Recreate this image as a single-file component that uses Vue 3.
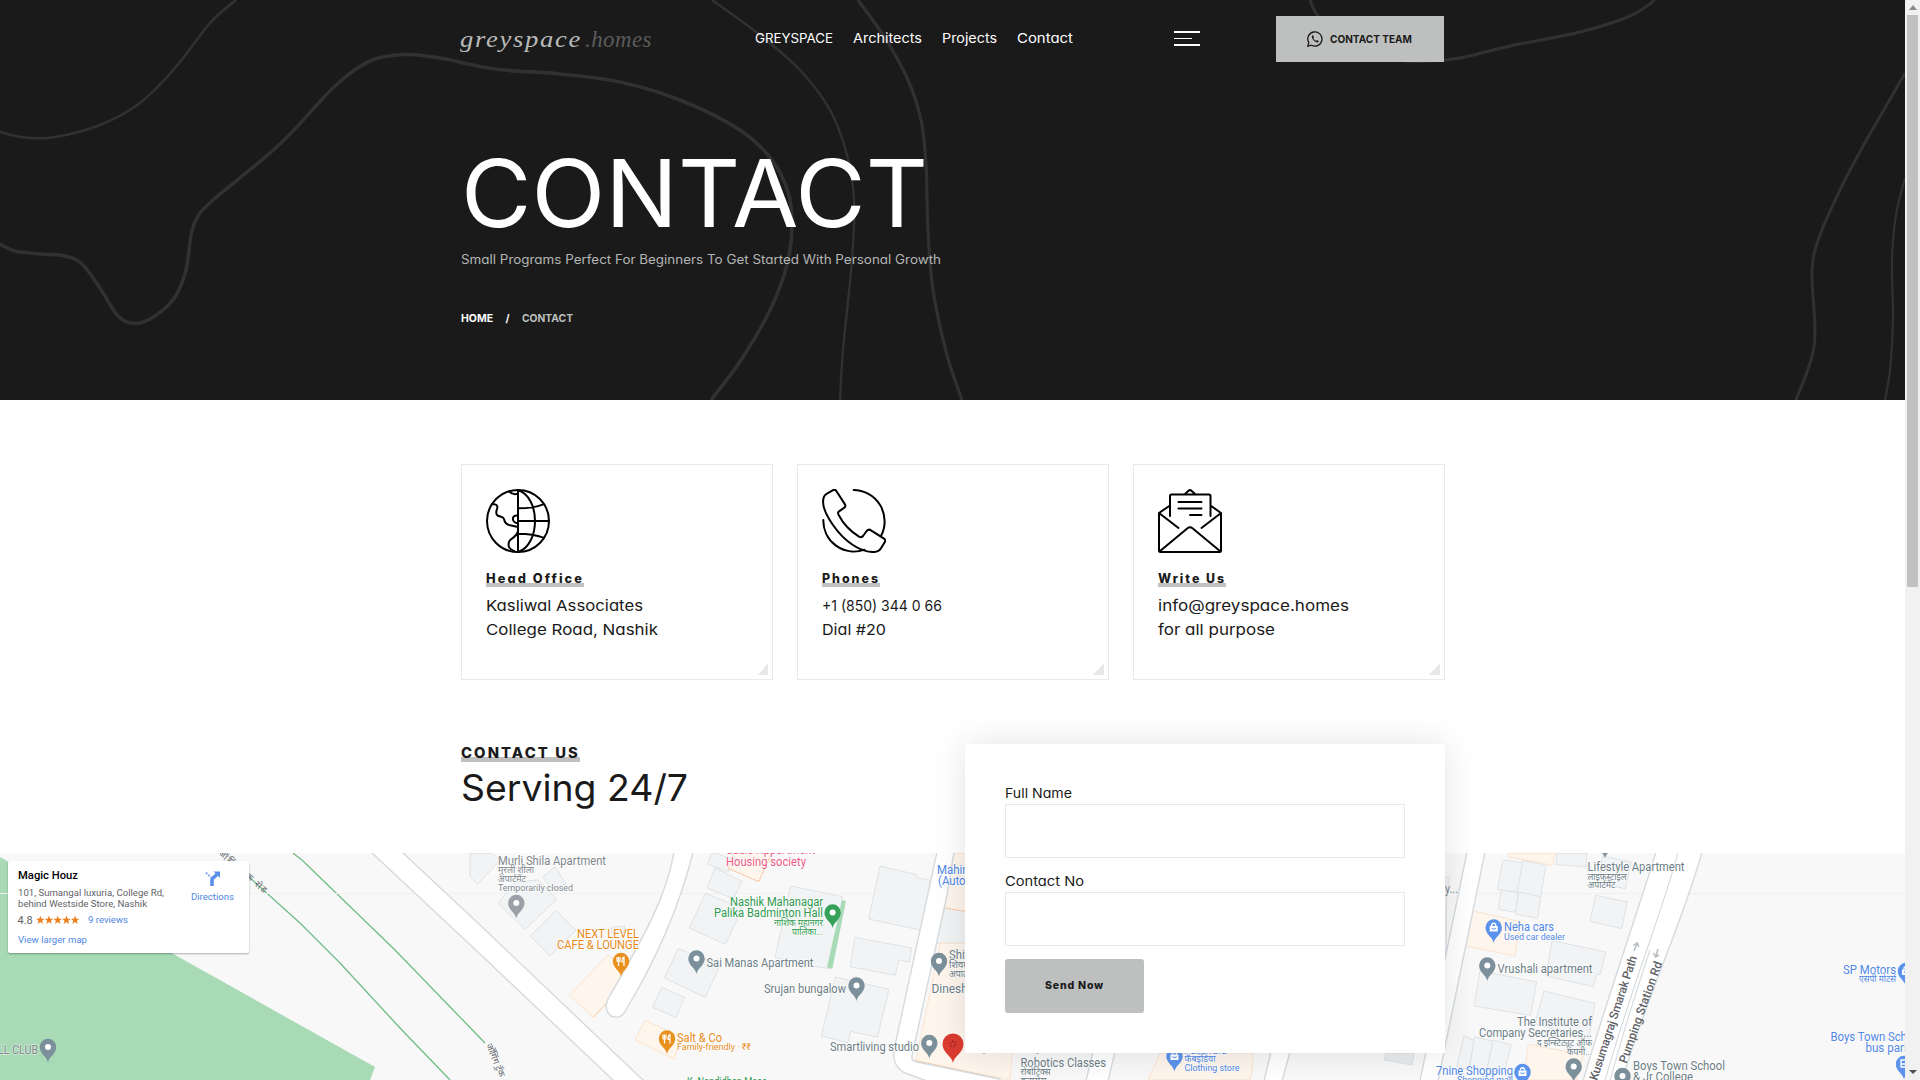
<script setup>
// Scales a label horizontally so it fills the given width.
const vFit = {
  mounted(el, { value }) {
    const natural = el.getBoundingClientRect().width
    el.style.transformOrigin = 'left center'
    el.style.transform = `scaleX(${value / natural})`
    el.style.marginRight = value - natural + 'px'
  },
}

// Catmull-Rom spline through a list of points.
function spline(p) {
  let d = `M${p[0]}`
  for (let i = 0; i < p.length - 1; i++) {
    const a = p[i - 1] || p[i], b = p[i], c = p[i + 1], e = p[i + 2] || c
    d += `C${b[0] + (c[0] - a[0]) / 6} ${b[1] + (c[1] - a[1]) / 6} ${c[0] - (e[0] - b[0]) / 6} ${c[1] - (e[1] - b[1]) / 6} ${c[0]} ${c[1]}`
  }
  return d
}

const curves = [
  { w: 2.6, p: [[0, 132], [25, 137.5], [55, 137], [100, 125], [140, 103], [175, 68], [210, 23], [236, 0]] },
  { w: 3.6, p: [[0, 244], [15, 251], [40, 254], [65, 256], [82, 264], [100, 288], [118, 316], [135, 323.5], [155, 316], [175, 297], [186, 270], [191, 235], [197, 218], [212, 201], [280, 144], [335, 86], [370, 61], [405, 54.5], [440, 58], [495, 69], [560, 74], [620, 82], [680, 100], [740, 130], [772, 160], [788, 192], [792, 225], [787, 265], [770, 310], [741, 360], [711, 400]] },
  { w: 2.4, p: [[712, 0], [760, 35], [800, 70], [830, 110], [847, 155], [854, 200], [852, 260], [843, 350], [840, 400]] },
  { w: 3.2, p: [[858, 0], [885, 38], [908, 80], [921, 120], [926, 165], [928, 230], [933, 290], [947, 355], [962, 400]] },
  { w: 3, p: [[1310, 0], [1319, 17], [1350, 45], [1400, 60], [1430, 61], [1460, 58], [1510, 46], [1580, 32], [1630, 16], [1655, 0]] },
  { w: 3, p: [[1905, 73], [1885, 108], [1862, 148], [1840, 190], [1820, 235], [1812, 270], [1815, 330], [1811, 360], [1796, 400]] },
  { w: 2.2, p: [[1905, 178], [1896, 215], [1892, 260], [1893, 320], [1890, 370], [1885, 400]] },
]

const links = [
  ['GREYSPACE', 78], ['Architects', 69], ['Projects', 55], ['Contact', 56],
]

const cards = [
  { icon: 'globe', title: 'Head Office', tw: 98, lines: [['Kasliwal Associates', 157], ['College Road, Nashik', 172]] },
  { icon: 'phone', title: 'Phones', tw: 58, lines: [['+1 (850) 344 0 66', 120], ['Dial #20', 64]] },
  { icon: 'mail', title: 'Write Us', tw: 68, lines: [['info@greyspace.homes', 191], ['for all purpose', 117]] },
]

const slate = '#6c7d86', grey = '#80868b', blue = '#5087e5', green = '#2f9a50', orange = '#e88a1a', pink = '#ec5a86'
// x, baseline, text, colour, size, width, anchor
const labels = [
  [498, 866, 'Murli Shila Apartment', grey, 12, 108],
  [498, 874, 'मुरली शीला', grey, 9, 36],
  [498, 883, 'अपार्टमेंट', grey, 9, 28],
  [498, 891.5, 'Temporarily closed', grey, 9, 75],
  [726, 855, 'Sudio Appartment', pink, 12, 89],
  [726, 866.5, 'Housing society', pink, 12, 80],
  [639, 938.5, 'NEXT LEVEL', orange, 12, 62, 'end'],
  [639, 949.5, 'CAFE & LOUNGE', orange, 12, 82, 'end'],
  [823, 906.5, 'Nashik Mahanagar', green, 12, 93, 'end'],
  [823, 917.5, 'Palika Badminton Hall', green, 12, 109, 'end'],
  [823, 926.5, 'नाशिक महानगर', green, 9, 49, 'end'],
  [823, 935.5, 'पालिका...', green, 9, 31, 'end'],
  [706.5, 967.5, 'Sai Manas Apartment', slate, 12, 107],
  [846, 993.5, 'Srujan bungalow', slate, 12, 82, 'end'],
  [677, 1042.5, 'Salt & Co', orange, 12, 45],
  [677, 1051, 'Family-friendly · ₹₹', orange, 9, 74],
  [919, 1051.5, 'Smartliving studio', slate, 12, 89, 'end'],
  [687, 1087, 'K. Nandidhan Masa', green, 12, 80],
  [937, 874.5, 'Mahindra', blue, 12, 48],
  [938, 885.5, '(Automobile', blue, 12, 62],
  [949, 960, 'Shivam', slate, 12, 37],
  [949, 969, 'शिवम', slate, 9, 20],
  [949, 978, 'अपार्टमेंट', slate, 9, 28],
  [931.5, 993.5, 'Dinesh villa', slate, 12, 60],
  [1020, 1052, 'Inspire', slate, 12, 36],
  [1020.5, 1067.5, 'Robotics Classes', slate, 12, 85.5],
  [1020.5, 1076, 'रोबोटिक्स', slate, 9, 30],
  [1020.5, 1085, 'क्लासेस', slate, 9, 26],
  [1184, 1055, 'Fabindia', blue, 12, 43],
  [1184.5, 1063, 'फॅबइंडिया', blue, 9, 31],
  [1184.5, 1072, 'Clothing store', blue, 9, 55],
  [1445, 893.5, 'y...', slate, 12, 13],
  [1587.5, 872, 'Lifestyle Apartment', slate, 12, 97],
  [1587.5, 880.5, 'लाइफस्टाइल', slate, 9, 39],
  [1587.5, 889, 'अपार्टमेंट', slate, 9, 28],
  [1504, 932, 'Neha cars', blue, 12, 50],
  [1504, 940.5, 'Used car dealer', blue, 9, 61],
  [1497.5, 973.5, 'Vrushali apartment', slate, 12, 95],
  [1592, 1026.5, 'The Institute of', slate, 12, 75, 'end'],
  [1592, 1037.5, 'Company Secretaries...', slate, 12, 113, 'end'],
  [1592, 1046.5, 'द इन्स्टिट्यूट ऑफ', slate, 9, 55, 'end'],
  [1592, 1055.5, 'कंपनी...', slate, 9, 25, 'end'],
  [1513, 1075.5, '7nine Shopping', blue, 12, 77, 'end'],
  [1513, 1084, 'Shopping mall', blue, 9, 56, 'end'],
  [1633, 1070.5, 'Boys Town School', slate, 12, 92],
  [1633, 1081.5, '& Jr College', slate, 12, 60],
  [1896, 974.5, 'SP Motors', blue, 12, 53, 'end'],
  [1896, 982.5, 'एसपी मोटर्स', blue, 9, 37, 'end'],
  [1830.5, 1041.5, 'Boys Town School', blue, 12, 92],
  [1865.5, 1052.5, 'bus parking', blue, 12, 60],
  [-42, 1055, 'FOOTBALL CLUB', grey, 12, 80, 'start', true],
]

// x, y of the head centre, colour, glyph
const pins = [
  [48, 1047, '#7b909b', 'dot'], [516.3, 903, '#9aa0a6', 'dot'], [621, 961, '#e8911f', 'food'],
  [696.5, 958.5, '#7b909b', 'dot'], [832.6, 912.5, '#35a159', 'dot'], [856.5, 985.5, '#7b909b', 'dot'],
  [667, 1038.5, '#e8911f', 'food'], [929.3, 1043, '#7b909b', 'dot'], [939, 961, '#7b909b', 'dot'],
  [1174.5, 1056, '#5b92ec', 'bag'], [1493.7, 927.5, '#5b92ec', 'bag'], [1487.3, 965.5, '#7b909b', 'dot'],
  [1605, 843, '#7b909b', 'dot'], [1522.5, 1072, '#5b92ec', 'bag'], [1573.7, 1066.5, '#7b909b', 'dot'],
  [1622.5, 1076, '#7b909b', 'dot'], [1906, 971, '#5b92ec', 'bag'], [1904, 1064, '#5b92ec', 'bus'],
]

// Building outlines, in thirds of a pixel from each tile's corner.
const westBlocks = [
  'M0 40V110L22 133L90 62L68 40Z', 'M140 125L84 188L165 268L260 178L205 120Z',
  'M255 80L218 112L246 146L288 132Z', 'M258 211L180 288L240 348L318 270Z', 'M425 262L464 258L462 276L424 280Z',
  'M725 40L712 72L775 96L790 60L740 40Z', 'M735 84L711 144L790 176L816 124Z',
  'M706 160L658 264L766 313L818 205Z', 'M625 326L583 414L706 472L750 376Z', 'M575 442L548 502L618 532L644 472Z',
  'M962 138L1117 170L1085 386L1035 380L915 352Z', 'M1230 78L1196 237L1350 270L1385 122L1342 114L1340 104Z',
  'M1155 292L1140 380L1276 406L1286 360L1318 366L1325 324Z', 'M1096 411L1257 448L1222 592L1142 574L1134 608L1054 588Z',
  'M1400 150H1500V310H1380Z',
]
const eastBlocks = [
  'M75 110L88 113L80 180L75 600V110Z', 'M248 60L233 148L300 158L308 68Z', 'M308 62L378 74L362 170L292 156Z', 'M243 150L235 208L288 217L294 158Z',
  'M296 156L362 170L353 235L286 222Z', 'M410 40L408 74L499 80L500 40Z', 'M548 48L634 66L616 146L536 130Z',
  'M527 166L622 186L605 266L510 244Z', 'M396 302L558 336L540 404L530 402L521 440L378 408Z',
  'M180 392L350 426L332 526L162 498Z', 'M372 453L525 490L505 600L345 550Z',
  'M132 587L110 680L145 690L163 602Z', 'M163 590L220 604L200 690L150 680Z', 'M220 600L274 614L252 700L200 690Z',
]
</script>

<template>
  <div class="window">
    <main class="page">
      <header class="hero">
        <svg class="contours" viewBox="0 0 1905 400" fill="none" stroke="#313131">
          <path v-for="(c, i) in curves" :key="i" :d="spline(c.p)" :stroke-width="c.w" />
        </svg>
        <div class="container bar">
          <a class="logo"><span v-fit="122">greyspace</span><span v-fit="67" class="tld">.homes</span></a>
          <nav class="links">
            <a v-for="[t, w] in links" :key="t" :style="{ width: w + 'px' }"><span v-fit="w">{{ t }}</span></a>
          </nav>
          <div class="burger"><i /><i /><i /></div>
          <a class="team">
            <svg width="16" height="16" viewBox="0 0 16 16" fill="none" stroke="#1a1a1a" stroke-width="1.3">
              <path d="M.8 15.2L1.8 11.6A7.1 7.1 0 1 1 4.5 14.2Z" />
              <path d="M5.4 4.2C4.3 5 4.6 7.2 6.5 9.3S10.700 12.200 11.600 10.700L11.700 9.900L9.900 9L9 9.900C7.900 9.500 6.900 8.500 6.300 7.300L6.900 6.400L6.200 4.300Z" fill="#1a1a1a" stroke="none" />
            </svg>
            <span v-fit="82">CONTACT TEAM</span>
          </a>
        </div>
        <div class="container intro">
          <h1><span v-fit="467">CONTACT</span></h1>
          <p class="sub"><span v-fit="480">Small Programs Perfect For Beginners To Get Started With Personal Growth</span></p>
          <div class="crumbs">
            <b><span v-fit="32">HOME</span></b><b class="slash">/</b><b class="here"><span v-fit="51">CONTACT</span></b>
          </div>
        </div>
      </header>

      <section class="container cards">
        <article v-for="c in cards" :key="c.title" class="card">
          <svg v-if="c.icon === 'globe'" class="icon" viewBox="138 147 192 192" stroke-width="6">
            <circle cx="234" cy="243" r="93" />
            <path d="M234 150V336M234 150C302 172 302 314 234 336M234 205Q280 205 310 193M234 243H327M234 281Q280 281 310 293" />
            <path d="M157 193C166 191 173 195 172 203C170 212 165 219 172 226C179 231 189 229 192 237C194 247 200 253 207 255L234 261M234 227C214 222 213 248 234 250M234 274C228 300 203 290 206 318Q207 326 222 333M207 154Q218 166 234 161" />
          </svg>
          <svg v-else-if="c.icon === 'phone'" class="icon" viewBox="1145 147 192 192" stroke-width="6">
            <path d="M1240 150A94 94 0 0 1 1322 288M1149 240A92 92 0 0 0 1272 329" />
            <path d="M1177 151Q1184 147 1188 153L1214 193Q1217 199 1212 203L1196 214Q1191 218 1195 225C1208 250 1232 275 1256 290Q1263 294 1268 288L1279 273Q1285 266 1292 271L1331 296Q1337 300 1333 307L1322 325Q1316 335 1302 336C1262 338 1212 305 1178 255C1155 222 1142 192 1151 170Q1154 164 1160 161Z" />
          </svg>
          <svg v-else class="icon" viewBox="0 0 64 64" stroke-width="2">
            <path d="M1 24V61.500Q1 63 2.500 63H61.500Q63 63 63 61.500V24L52.500 16.500M1 24L12 16.500M12 27V7Q12 5.500 13.500 5.500H51Q52.500 5.500 52.500 7V27M26.500 5.500L30.500 1.800Q32 .5 33.500 1.800L37.500 5.500M20.500 13H43.500M20.500 19.500H43.500M32 26H43.500M1 24L20.500 39M63 24L43.500 39M1.500 62.500L29.500 39.300Q32 37.300 34.500 39.300L62.500 62.500" />
          </svg>
          <h3 class="mark"><span v-fit="c.tw">{{ c.title }}</span></h3>
          <p v-for="[t, w] in c.lines" :key="t"><span v-fit="w">{{ t }}</span></p>
          <i class="corner" />
        </article>
      </section>

      <section class="contact">
        <div class="map">
          <svg width="1905" height="227" viewBox="0 853 1905 227">
            <defs>
              <g id="pin"><path d="M0 15.500C-1 9.500-8.200 7-8.200 0A8.200 8.200 0 0 1 8.200 0C8.200 7 1 9.500 0 15.500Z" /></g>
            </defs>
            <path d="M0 857L375 1067L370 1080H0Z" fill="#a8dab5" />
            <path d="M293 853L303 861L395 950L485 1043M250 878L300 923L340 963L400 1028L450 1080" fill="none" stroke="#70bb88" stroke-width="1.300" />
            <path d="M0 893.500H1905" stroke="#f1f1f2" />
            <g transform="translate(470 840) scale(.33333)" fill="#f1f3f4" stroke="#dfe2e5" stroke-width="3">
              <path v-for="d in westBlocks" :key="d" :d="d" />
              <g fill="#fef5ec" stroke="#fbe3cf">
                <path d="M415 344L298 466L370 532L486 408Z" /><path d="M525 540L495 600L614 657L630 590Z" />
                <path d="M790 40L775 85L866 125L905 40Z" /><path d="M1450 40H1500V216L1415 203Z" />
                <path d="M1410 310L1338 662L1620 720L1650 310Z" />
              </g>
              <path d="M486 408L370 532M775 85L866 125L905 40M1450 40L1415 203L1500 216M1338 662L1570 712" fill="none" stroke="#f6bf95" stroke-dasharray="6 3" />
              <path d="M1116 180L1128 183L1087 386L1071 382Z" fill="#a8dab5" stroke="none" />
            </g>
            <path d="M1160 1053L1148 1080H1250Q1256 1053 1250 1053Z" fill="#fef5ec" stroke="#fbe3cf" />
            <path d="M1386 1053L1384 1060L1412 1065L1414 1053Z" fill="#e9ebed" stroke="#dfe2e5" />
            <g transform="translate(1420 840) scale(.33333)" fill="#f1f3f4" stroke="#dfe2e5" stroke-width="3">
              <path v-for="d in eastBlocks" :key="d" :d="d" />
              <g fill="#fef5ec" stroke="#fbe3cf">
                <path d="M265 40V50L398 76L404 40Z" /><path d="M155 212L133 317L285 348L302 245Z" /><path d="M325 612L310 720H470L490 645Z" />
              </g>
            </g>
            <g fill="#fff" stroke="#d5dade" stroke-width="1.400">
              <path d="M402 852L480 925L644 1081H614L480 954L371 852Z" />
              <path d="M674 852C667 895 645 935 608 999C603 1010 610 1017 615 1017C621 1018 624 1014 627 1008C653 965 680 907 693 852Z" />
              <path d="M937 852L894 1050C892 1062 898 1071 908 1074L930 1082H1000V1079L917 1062Q911 1061 912 1056L947 895L954 852Z" />
              <path d="M1093 1052L1086 1081H1108L1115 1052Z" /><path d="M1271 1052L1264 1081H1282L1290 1052Z" />
              <path d="M1467 852L1420 1081H1438L1485 852Z" />
              <path d="M1656 852C1640 905 1605 1005 1583 1081H1622C1645 1000 1682 925 1702 852Z" />
              <path d="M1678 852C1665 905 1630 990 1605 1081M1650 950Q1625 1025 1610 1081" fill="none" stroke-width="1.100" />
            </g>
            <g class="roads">
              <text transform="translate(1597 1081) rotate(-72)" textLength="130">Kusumagraj Smarak Path</text>
              <text transform="translate(1626.500 1064) rotate(-70.500)" textLength="107">Pumping Station Rd</text>
              <text transform="translate(218 854) rotate(41)" textLength="60" class="hi">जॉगिंग ट्रॅक रोड</text>
              <text transform="translate(486 1045) rotate(68)" class="hi">जॉगिंग ट्रॅक</text>
            </g>
            <g fill="none" stroke="#b5bbc0" stroke-width="1.500">
              <path d="M1634 951L1637 943M1633.500 945.500L1637.200 943L1638.800 947" />
              <path d="M1658 949L1655.500 957M1653.500 953L1655.500 957L1659 955" />
            </g>
            <g class="labels">
              <text v-for="(l, i) in labels" :key="i" :x="l[0]" :y="l[1] - .6" :fill="l[3]" :font-size="l[4]" :textLength="l[5]"
                lengthAdjust="spacingAndGlyphs" :text-anchor="l[6] || 'start'" :class="{ park: l[7] }">{{ l[2] }}</text>
            </g>
            <g v-for="(p, i) in pins" :key="i" :transform="`translate(${p[0]} ${p[1]})`">
              <use href="#pin" :fill="p[2]" />
              <circle v-if="p[3] === 'dot'" r="3" fill="#fff" />
              <path v-else-if="p[3] === 'food'" d="M-4-4V-1Q-4 1-2.500 1V5M-2.500-4V0M-1-4V-1Q-1 1-2.500 1M3 5V-4Q1-3 1 1H3" fill="none" stroke="#fff" stroke-width="1.200" />
              <g v-else-if="p[3] === 'bag'" fill="none">
                <path d="M-4-1.500H4V4H-4Z" fill="#fff" />
                <path d="M-2-1.500V-3Q0-5.500 2-3V-1.500" stroke="#fff" stroke-width="1.300" />
                <path d="M-2 .5Q0 3 2 .5" stroke="#5b92ec" stroke-width="1.200" />
              </g>
              <path v-else d="M-3-4H3V3H-3ZM-3 0H3" fill="none" stroke="#fff" stroke-width="1.300" />
            </g>
            <g transform="translate(953 1044)">
              <path d="M0 19C-1 12-10.500 9-10.500 0A10.500 10.500 0 0 1 10.500 0C10.500 9 1 12 0 19Z" fill="#db3b30" />
              <circle r="2.600" fill="none" stroke="#7a1712" stroke-width="1.200" stroke-dasharray="1.200 1.500" />
            </g>
            <circle cx="984" cy="1050.500" r="3" fill="#db3b30" />
          </svg>
          <div class="place">
            <div class="details">
              <strong><span v-fit="60">Magic Houz</span></strong>
              <p><span v-fit="146">101, Sumangal luxuria, College Rd,</span></p>
              <p><span v-fit="129">behind Westside Store, Nashik</span></p>
              <div class="rating">
                <span class="score">4.8</span>
                <svg width="44" height="10" viewBox="0 0 44 10" fill="#ef7f1e">
                  <path v-for="n in 5" :key="n" :transform="`translate(${(n - 1) * 8.700} 0)`" d="M4.300.5L5.400 3.700H8.600L6.100 5.700L7 9L4.300 7.100L1.600 9L2.500 5.700L0 3.700H3.200Z" />
                </svg>
                <a><span v-fit="40">9 reviews</span></a>
              </div>
              <a class="larger"><span v-fit="69">View larger map</span></a>
            </div>
            <div class="directions">
              <svg width="16" height="16" viewBox="0 0 16 16">
                <path d="M7 15V9Q7 7.500 8.500 6.500L12 3.500" fill="none" stroke="#5b8fe8" stroke-width="3.600" />
                <path d="M8.500.5H15V7Z" fill="#5b8fe8" />
                <path d="M.8 1.500L6 6.500" stroke="#8db1ef" stroke-width="2" stroke-dasharray="2.200 1" />
              </svg>
              <a><span v-fit="43">Directions</span></a>
            </div>
          </div>
        </div>

        <div class="container split">
          <div class="heading">
            <h4 class="mark"><span v-fit="119">CONTACT US</span></h4>
            <h2><span v-fit="227">Serving 24/7</span></h2>
          </div>
          <form class="form" @submit.prevent>
            <label><span v-fit="67">Full Name</span><input type="text"></label>
            <label><span v-fit="79">Contact No</span><input type="text"></label>
            <button><span v-fit="59">Send Now</span></button>
          </form>
        </div>
      </section>
    </main>
    <aside class="scrollbar"><i class="up" /><div class="thumb" /><i class="down" /></aside>
  </div>
</template>

<style>
body { margin: 0; overflow: hidden; }
</style>

<style scoped>
* { box-sizing: border-box; margin: 0; padding: 0; }
.window { display: flex; width: 1920px; height: 1080px; overflow: hidden; font-family: Inter, "Open Sans", sans-serif; font-feature-settings: "cv11"; color: #1a1a1a; background: #fff; }
.page { width: 1905px; height: 1080px; overflow: hidden; }
.container { width: 984px; margin: 0 auto; }
span { display: inline-block; white-space: nowrap; }

.hero { position: relative; height: 400px; background: #1a1a1a; color: #fff; }
.contours { position: absolute; inset: 0; width: 1905px; height: 400px; }
.bar, .intro { position: relative; }
.bar { display: flex; align-items: center; height: 77px; margin-left: 460px; }
.logo { width: 192px; font: italic 24px/30px "Liberation Serif", serif; letter-spacing: 1.500px; color: #b9bbba; white-space: nowrap; }
.logo .tld { color: #5c5c5c; margin-left: 3px; letter-spacing: .5px; }
.links { display: flex; gap: 20px; margin: -1px 0 0 103px; font-size: 13px; line-height: 20px; white-space: nowrap; }
.burger { display: flex; flex-direction: column; justify-content: space-between; width: 26px; height: 15px; margin-left: 101px; }
.burger i { height: 2px; background: #fff; }
.burger i:nth-child(2) { width: 18px; height: 1px; }
.team { display: flex; align-items: center; gap: 7px; width: 168px; height: 46px; margin: 1px 0 0 auto; padding: 0 0 1px 31px; background: #bdc0bf; color: #1a1a1a; font-size: 11px; font-weight: 700; }
.intro { padding-top: 69px; }
h1 { font-size: 93px; font-weight: 400; line-height: 95px; height: 95px; }
.sub { margin-top: 9px; height: 20px; font-size: 12.500px; line-height: 20px; color: #b3b5b4; }
.crumbs { display: flex; margin-top: 41px; font-size: 10.500px; line-height: 16px; }
.crumbs .slash { margin: 0 12px 0 13px; }
.crumbs .here { color: #bdc0bf; }

.cards { display: grid; grid-template-columns: repeat(3, 312px); gap: 24px; padding-top: 63px; }
.card { position: relative; height: 216px; padding: 24px; border: 1px solid #e8e9ea; }
.icon { display: block; width: 64px; height: 64px; fill: none; stroke: #000; stroke-linecap: round; stroke-linejoin: round; }
.mark { display: table; height: 18px; line-height: 18px; font-weight: 800; letter-spacing: 2px; background: linear-gradient(#bfc0bf, #bfc0bf) left bottom / 100% 4px no-repeat; }
h3.mark { margin: 16px 0 7px; font-size: 12.500px; }
h3.mark span { position: relative; top: 1px; }
.card p { height: 24px; font-size: 15px; line-height: 24px; }
.corner { position: absolute; right: 4px; bottom: 4px; width: 11px; height: 11px; background: linear-gradient(135deg, transparent 50%, #e6e8ea 50%); }
.cards { padding-top: 64px; }

.contact { position: relative; height: 336px; margin-top: 64px; }
.map { position: absolute; left: 0; top: 109px; width: 1905px; height: 227px; background: #f8f8f8; }
.map svg { display: block; }
.labels { font-family: Roboto, "Noto Sans", sans-serif; paint-order: stroke; stroke: rgba(255, 255, 255, .8); stroke-width: 1.500px; stroke-linejoin: round; }
.labels .park { stroke: #d8eddd; }
.roads { font: 500 12px Roboto, sans-serif; fill: #5f6368; }
.roads .hi { font-size: 9px; }
.place { position: absolute; left: 8px; top: 8px; display: flex; width: 241px; height: 92px; padding: 7px 15px 0 9.500px; background: #fff; border-radius: 2px; box-shadow: 0 1px 2px rgba(0, 0, 0, .3); font-family: Roboto, sans-serif; font-size: 9px; line-height: 11px; color: #5f6368; }
.details { flex: 1; }
.place strong { display: block; height: 20px; font-size: 10.500px; font-weight: 500; line-height: 15px; color: #000; }
.place p { height: 11px; white-space: nowrap; }
.place a { color: #5087e5; white-space: nowrap; }
.rating { display: flex; align-items: center; height: 18px; margin-top: 1px; }
.score { width: 18px; margin-right: 0; font-size: 11px; }
.rating a { margin-left: 8px; }
.larger { display: block; margin-top: 6px; line-height: 11px; }
.directions { display: flex; flex-direction: column; align-items: center; gap: 5px; padding-top: 3px; }

.split { position: relative; display: flex; justify-content: space-between; }
h4.mark { font-size: 14px; background-size: 100% 5px; }
h2 { margin-top: 4px; font-size: 36.500px; font-weight: 400; line-height: 44px; }
.form { width: 480px; height: 309px; padding: 39px 40px; background: #fff; box-shadow: 0 0 30px rgba(40, 50, 60, .13); }
label { display: block; margin-bottom: 13px; font-size: 13px; line-height: 21px; }
label span { display: table; height: 21px; }
input { display: block; width: 400px; height: 54px; border: 1px solid #e8e9ea; background: #fff; }
button { display: block; width: 139px; height: 54px; border: 0; border-radius: 3px; background: #bdc0bf; color: #1a1a1a; font: 800 10.500px/52px Inter, sans-serif; font-feature-settings: "cv11"; letter-spacing: .8px; }

.scrollbar { display: flex; flex-direction: column; align-items: center; width: 15px; height: 1080px; background: #f1f1f1; }
.up, .down { width: 0; height: 0; border: 4px solid transparent; }
.up { margin: 5px 0; border-top: 0; border-bottom: 5px solid #8a8a8a; }
.thumb { width: 11px; height: 572px; background: #c1c1c1; }
.down { margin-top: auto; margin-bottom: 6px; border-bottom: 0; border-top: 4px solid #505050; }
</style>
